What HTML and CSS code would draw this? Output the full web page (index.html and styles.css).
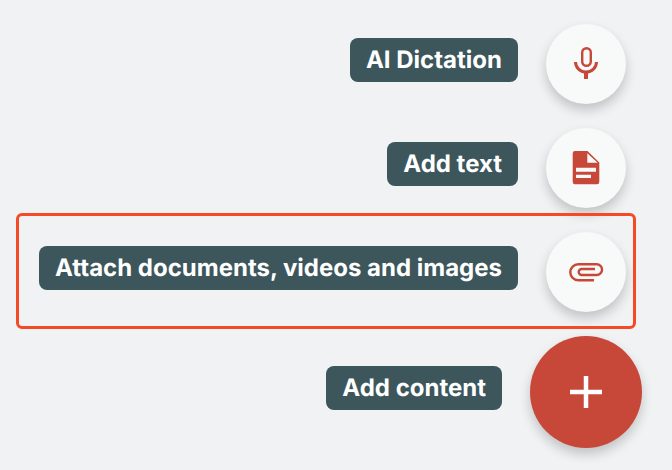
FILE: index.html
```html
<!DOCTYPE html>
<html lang="en">
<head>
<meta charset="utf-8">
<title>Add content</title>
<link rel="stylesheet" href="styles.css">
</head>
<body>
<main class="menu">
  <div class="row">
    <span class="label">AI Dictation</span>
    <button class="fab-small" aria-label="AI Dictation">
      <svg viewBox="0 -1 32 34" width="32" height="34"><rect x="12.2" y="0.2" width="8.600" height="17.600" rx="4.300" fill="none" stroke="currentColor" stroke-width="2.400"/><path d="M5.500 14a10.500 10 0 0 0 21 0" fill="none" stroke="currentColor" stroke-width="3"/><path d="M16 24v7" stroke="currentColor" stroke-width="4"/></svg>
    </button>
  </div>
  <div class="row">
    <span class="label">Add text</span>
    <button class="fab-small" aria-label="Add text">
      <svg viewBox="0 0 32 40" width="32" height="40"><path fill-rule="evenodd" fill="currentColor" d="M5 3H17.500L29.300 14.500V34a2.300 2.300 0 0 1-2.300 2.300H5A2.300 2.300 0 0 1 2.700 34V5.300A2.300 2.300 0 0 1 5 3ZM17.300 5.300V14.700H27.700ZM6 19.700v4H26v-4ZM6 26.700v3.300H21v-3.300Z"/></svg>
    </button>
  </div>
  <div class="row">
    <span class="label">Attach documents, videos and images</span>
    <button class="fab-small" aria-label="Attach">
      <svg viewBox="0 0 40 40" width="40" height="40"><path d="M28 28.300H12.300a8 8 0 0 1 0-16H30.700a5.350 5.350 0 0 1 0 10.700H15.700a3 3 0 0 1 0-6H29" fill="none" stroke="currentColor" stroke-width="2.400"/></svg>
    </button>
  </div>
  <div class="row row-main">
    <span class="label">Add content</span>
    <button class="fab-main" aria-label="Add content">
      <svg viewBox="0 0 32 32" width="32" height="32"><path d="M16 0V32M0 16H32" stroke="#fff" stroke-width="4.500" fill="none"/></svg>
    </button>
  </div>
  <div class="highlight"></div>
</main>
</body>
</html>
```
FILE: styles.css
```css
* { box-sizing: border-box; }
html, body { margin: 0; height: 100%; }
body {
  background: #f1f2f4;
  font-family: Inter, "Liberation Sans", sans-serif;
  text-rendering: geometricPrecision;
  overflow: hidden;
}
.menu {
  position: relative;
  width: 672px;
  height: 470px;
  padding: 24px 46px 0 0;
  display: flex;
  flex-direction: column;
  align-items: flex-end;
  gap: 24px;
}
.row {
  display: flex;
  align-items: center;
  justify-content: flex-end;
  gap: 28px;
}
.row-main {
  margin-right: -16px;
}
.label {
  background: #3c565c;
  color: #fff;
  font-size: 24px;
  font-weight: 700;
  line-height: 44px;
  height: 44px;
  margin-bottom: 8px;
  padding: 0 16px;
  border-radius: 8px;
  white-space: nowrap;
}
.fab-small, .fab-main {
  border: 0;
  padding: 0;
  border-radius: 50%;
  display: flex;
  align-items: center;
  justify-content: center;
  flex: none;
}
.fab-small {
  width: 80px;
  height: 80px;
  background: #f8f9f9;
  color: #c74838;
  box-shadow: 0 6px 12px rgba(0, 0, 0, 0.2);
}
.fab-main {
  width: 112px;
  height: 112px;
  background: #c74838;
  box-shadow: 0 6px 12px rgba(0, 0, 0, 0.2);
}
.highlight {
  position: absolute;
  left: 16px;
  top: 213px;
  width: 620px;
  height: 116px;
  border: 3px solid #f44a26;
  border-radius: 6px;
  pointer-events: none;
}
```
